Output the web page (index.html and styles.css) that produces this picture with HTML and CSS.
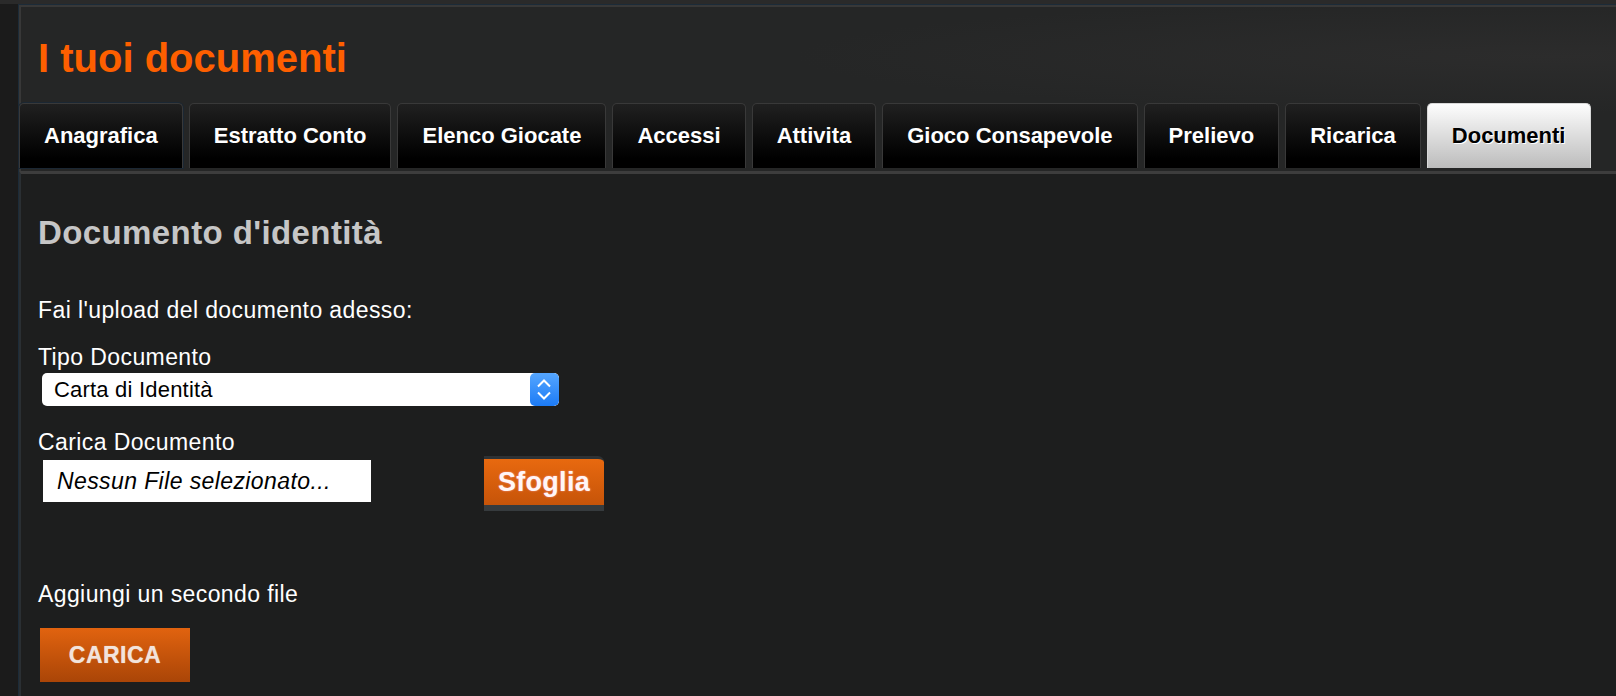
FILE: index.html
```html
<!DOCTYPE html>
<html lang="it">
<head>
  <meta charset="UTF-8" />
  <meta name="viewport" content="width=device-width, initial-scale=1.0" />
  <title>I tuoi documenti</title>
  <link rel="stylesheet" href="styles.css">
</head>
<body>

  <div class="panel">
    <!-- header con titolo e tab -->
    <div class="panel-head">
      <h1 class="page-title">I tuoi documenti</h1>
      <div class="tabs">
        <a class="tab tab-first">Anagrafica</a>
        <a class="tab">Estratto Conto</a>
        <a class="tab">Elenco Giocate</a>
        <a class="tab">Accessi</a>
        <a class="tab">Attivita</a>
        <a class="tab">Gioco Consapevole</a>
        <a class="tab">Prelievo</a>
        <a class="tab">Ricarica</a>
        <a class="tab active">Documenti</a>
      </div>
    </div>

    <!-- upload documento -->
    <div class="panel-body">
      <h2 class="section-title">Documento d'identità</h2>
      <p class="intro">Fai l'upload del documento adesso:</p>

      <label class="field-label">Tipo Documento</label>
      <div class="select">
        <span class="select-value">Carta di Identità</span>
        <span class="select-arrow">
          <svg width="29" height="33" viewBox="0 0 29 33">
            <path d="M8 13.5 L14 7.5 L20 13.5" fill="none" stroke="#fff" stroke-width="2"/>
            <path d="M8 19.5 L14 25.5 L20 19.5" fill="none" stroke="#fff" stroke-width="2"/>
          </svg>
        </span>
      </div>

      <label class="field-label upload-label">Carica Documento</label>
      <div class="upload-row">
        <div class="file-box">Nessun File selezionato...</div>
        <button class="btn-browse">Sfoglia</button>
      </div>

      <p class="second-file">Aggiungi un secondo file</p>
      <button class="btn-upload">CARICA</button>
    </div>
  </div>

</body>
</html>
```

FILE: styles.css
```css
* {
  box-sizing: border-box;
}

html, body {
  height: 100%;
}

body {
  margin: 0;
  padding: 0;
  overflow: hidden;
  background: #1b1b1b;
  border-top: 4px solid #2a2a2a;
  font-family: "Liberation Sans", Arial, sans-serif;
  color: #fff;
  display: flex;
  flex-direction: column;
}

.panel {
  flex: 1;
  margin-left: 18px;
  border-top: 1px solid #1c2b38;
  border-left: 1px solid #1c2b38;
  display: flex;
  flex-direction: column;
}

.panel-head {
  background: radial-gradient(ellipse at 96% 30%, #2c2c2c, #252626 35%);
  border-top: 2px solid #383838;
  border-left: 2px solid #383838;
  padding: 28px 0 3px 0;
}

.page-title {
  margin: 0 0 0 17px;
  font-size: 40px;
  line-height: 46px;
  font-weight: bold;
  color: #fe5f00;
}

.tabs {
  display: flex;
  gap: 6px;
  margin-top: 22px;
  margin-left: -2px;
}

.tab {
  height: 65px;
  padding: 0 24px;
  line-height: 64px;
  font-size: 22px;
  font-weight: bold;
  color: #fff;
  white-space: nowrap;
  background: linear-gradient(#202020, #000 85%);
  border: 1px solid #393939;
  border-bottom: none;
  border-radius: 5px 5px 0 0;
  cursor: pointer;
}

.tab-first {
  box-shadow: 0 0 0 1px #1b2733;
}

.tab.active {
  color: #000;
  text-shadow: 1px 1px 0 #fff;
  background: linear-gradient(#fdfdfd, #bcbcbc);
  border-color: #d8d8d8;
}

.panel-body {
  flex: 1;
  background: #1d1e1e;
  border-top: 3px solid #3d3d3d;
  border-left: 2px solid #2a2f33;
  padding: 40px 0 14px 17px;
}

.section-title {
  margin: 0;
  font-size: 33px;
  line-height: 38px;
  letter-spacing: 0.4px;
  font-weight: bold;
  color: #c6c6c6;
}

.intro, .second-file, .field-label {
  display: block;
  font-size: 23px;
  line-height: 26px;
  letter-spacing: 0.4px;
  color: #fff;
}

.intro {
  margin: 45px 0 0;
}

.field-label {
  margin-top: 21px;
}

.select {
  display: flex;
  width: 517px;
  height: 33px;
  margin: 3px 0 0 4px;
  background: #fff;
  border-radius: 5px;
  overflow: hidden;
}

.select-value {
  flex: 1;
  padding-left: 12px;
  line-height: 33px;
  font-size: 22px;
  letter-spacing: 0.2px;
  color: #000;
}

.select-arrow {
  width: 29px;
  height: 33px;
  background: linear-gradient(#55a6ff, #1c7bf6);
  border-radius: 5px;
}

.select-arrow svg {
  display: block;
}

.upload-label {
  margin-top: 23px;
}

.upload-row {
  display: flex;
  align-items: flex-start;
  margin-top: 1px;
}

.file-box {
  width: 328px;
  height: 42px;
  margin: 4px 0 0 5px;
  padding-left: 14px;
  background: #fff;
  color: #000;
  font-size: 23px;
  font-style: italic;
  letter-spacing: 0.4px;
  line-height: 42px;
}

.btn-browse {
  width: 120px;
  height: 55px;
  margin-left: 113px;
  padding: 0;
  border: none;
  border-top: 3px solid #2e3235;
  border-bottom: 6px solid #363b3e;
  border-radius: 0 6px 0 0;
  background: linear-gradient(#e8690f, #c65409);
  font-family: inherit;
  font-size: 27px;
  font-weight: bold;
  letter-spacing: 0.3px;
  line-height: 46px;
  color: #fff6f6;
  text-shadow: 0 0 2px rgba(255, 170, 190, 0.8);
  cursor: pointer;
}

.second-file {
  margin: 70px 0 0;
}

.btn-upload {
  display: block;
  width: 150px;
  height: 54px;
  margin: 21px 0 0 2px;
  padding: 0;
  border: none;
  background: linear-gradient(#e1630f, #aa4507);
  font-family: inherit;
  font-size: 23px;
  font-weight: bold;
  letter-spacing: 0.5px;
  color: #f2e4dc;
  text-shadow: 0 0 1px rgba(255, 255, 255, 0.6);
  cursor: pointer;
}
```
